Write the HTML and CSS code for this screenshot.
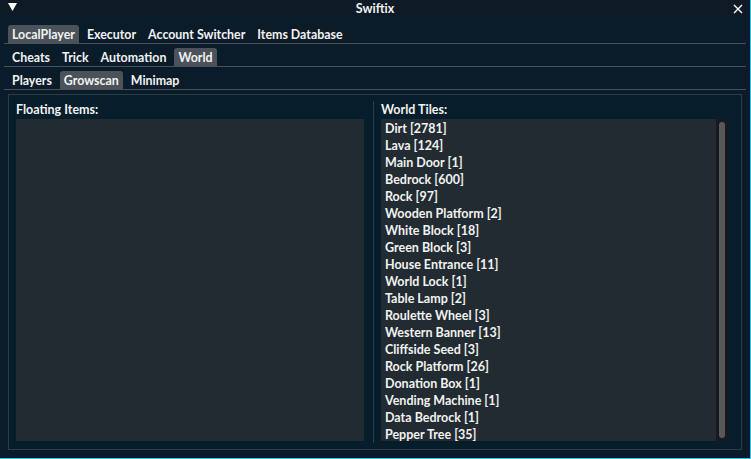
FILE: index.html
```html
<!DOCTYPE html>
<html>
<head>
<meta charset="utf-8">
<link rel="stylesheet" href="styles.css">
</head>
<body>
<div class="window">
  <div class="titlebar">
    <svg class="collapse" width="9" height="8" viewBox="0 0 9 8"><polygon points="0,0 9,0 4.5,8" fill="#fff"/></svg>
    <span class="title">Swiftix</span>
    <svg class="close" width="10" height="10" viewBox="0 0 10 10"><path d="M1 1L9 9M9 1L1 9" stroke="#fff" stroke-width="1.4"/></svg>
  </div>
  <div class="tabs">
    <div class="tabrow">
      <span class="tab active">LocalPlayer</span>
      <span class="tab">Executor</span>
      <span class="tab">Account Switcher</span>
      <span class="tab hover">Items Database</span>
    </div>
    <div class="tabrow">
      <span class="tab">Cheats</span>
      <span class="tab">Trick</span>
      <span class="tab">Automation</span>
      <span class="tab active">World</span>
    </div>
    <div class="tabrow">
      <span class="tab">Players</span>
      <span class="tab active">Growscan</span>
      <span class="tab">Minimap</span>
    </div>
  </div>
  <div class="child">
    <div class="col left">
      <div class="label">Floating Items:</div>
      <div class="listbox"></div>
    </div>
    <div class="col right">
      <div class="label">World Tiles:</div>
      <div class="listbox withscroll">
        <div class="items">
          <div class="item">Dirt [2781]</div>
          <div class="item">Lava [124]</div>
          <div class="item">Main Door [1]</div>
          <div class="item">Bedrock [600]</div>
          <div class="item">Rock [97]</div>
          <div class="item">Wooden Platform [2]</div>
          <div class="item">White Block [18]</div>
          <div class="item">Green Block [3]</div>
          <div class="item">House Entrance [11]</div>
          <div class="item">World Lock [1]</div>
          <div class="item">Table Lamp [2]</div>
          <div class="item">Roulette Wheel [3]</div>
          <div class="item">Western Banner [13]</div>
          <div class="item">Cliffside Seed [3]</div>
          <div class="item">Rock Platform [26]</div>
          <div class="item">Donation Box [1]</div>
          <div class="item">Vending Machine [1]</div>
          <div class="item">Data Bedrock [1]</div>
          <div class="item">Pepper Tree [35]</div>
        </div>
        <div class="scrollbar"><div class="grab"></div></div>
      </div>
    </div>
  </div>
</div>
</body>
</html>
```
FILE: styles.css
```css
* { box-sizing: border-box; }
html, body { margin: 0; padding: 0; background: #0a1c2a; }
body {
  font-family: "Lato", "Open Sans", sans-serif;
  font-weight: 700;
  font-size: 12.5px;
  color: #f2f2f2;
}
.window {
  width: 751px;
  height: 459px;
  background: #0a1c2a;
  border-right: 1px solid #33bde6;
  border-bottom: 1px solid #33bde6;
  display: flex;
  flex-direction: column;
  overflow: hidden;
}
.titlebar {
  height: 17px;
  background: #0f1a27;
  display: flex;
  align-items: center;
  justify-content: space-between;
  padding: 0 7px 0 8px;
  flex: none;
}
.title { line-height: 17px; }
.collapse { margin-top: -3px; }
.tabs {
  margin-top: 4px;
  padding: 0 4px;
}
.tabrow {
  display: flex;
  gap: 4px;
  padding: 4px 4px 0;
  border-bottom: 1px solid #4a5057;
  font-size: 12.4px;
}
.tab {
  height: 18px;
  line-height: 18px;
  padding: 1px 4px 0;
  border-radius: 3px 3px 0 0;
}
.tab.active { background: #4b5259; }
.tab.hover { background: #0d1b27; }
.child {
  margin: 4px 8px 0;
  height: 356px;
  border: 1px solid #2e3c48;
  background: #061d2b;
  display: grid;
  grid-template-columns: 357px 1fr;
  padding: 6px 13px 0 7px;
}
.col { display: flex; flex-direction: column; }
.col.right {
  border-left: 1px solid #2e3c48;
  padding-left: 7px;
  height: 342px;
}
.label { height: 17px; line-height: 17px; margin-bottom: 1px; }
.listbox {
  height: 322px;
  background: #212b31;
  margin-right: 9px;
}
.col.right .listbox { margin-right: 0; }
.withscroll { display: flex; }
.items { flex: 1; padding: 1px 4px 0; }
.item { height: 17px; line-height: 17px; white-space: nowrap; }
.scrollbar {
  width: 12px;
  background: #161a1d;
  padding: 3px;
}
.grab {
  height: 100%;
  background: #565859;
  border-radius: 3px;
}
```
